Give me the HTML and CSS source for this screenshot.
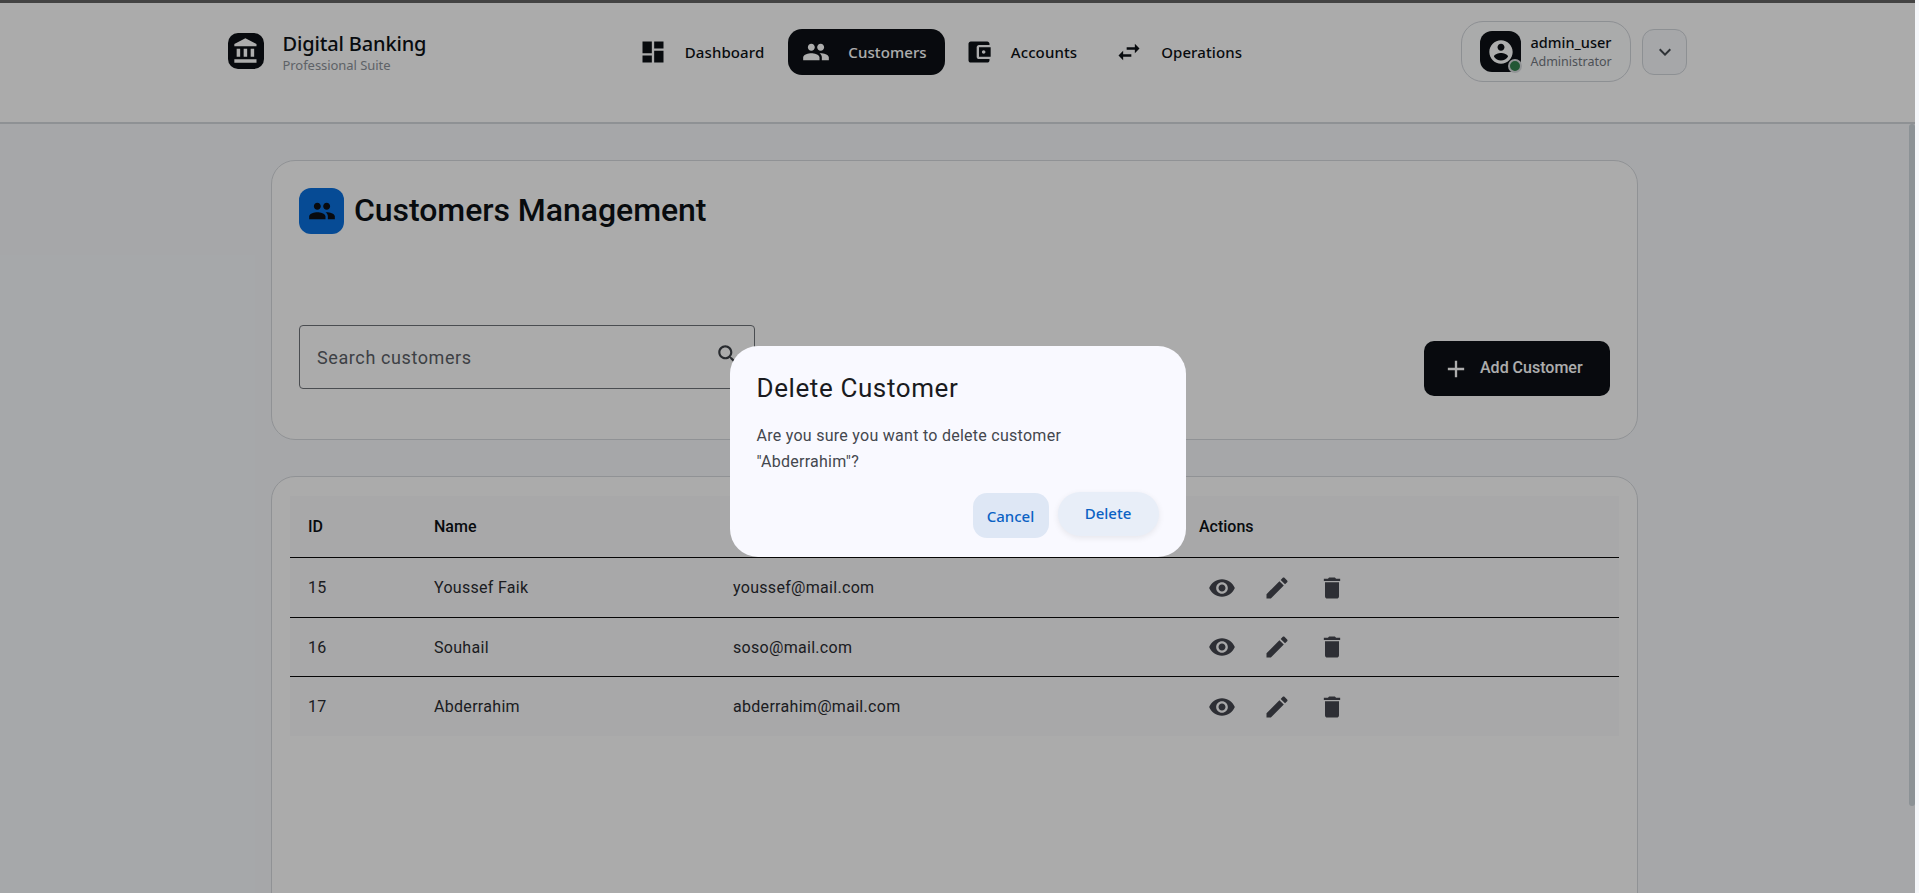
FILE: index.html
```html
<!DOCTYPE html>
<html lang="en">
<head>
  <meta charset="UTF-8" />
  <meta name="viewport" content="width=device-width, initial-scale=1.0"/>
  <title>Digital Banking</title>
  <link rel="stylesheet" href="styles.css">
</head>
<body>

  <svg class="icon-defs" aria-hidden="true">
    <symbol id="i-bank" viewBox="0 0 24 24"><path d="M4 10v7h3v-7H4zm6 0v7h3v-7h-3zM2 22h19v-3H2v3zm14-12v7h3v-7h-3zm-4.500-9L2 6v2h19V6l-9.500-5z"/></symbol>
    <symbol id="i-dashboard" viewBox="0 0 24 24"><path d="M3 13h8V3H3v10zm0 8h8v-6H3v6zm10 0h8V11h-8v10zm0-18v6h8V3h-8z"/></symbol>
    <symbol id="i-people" viewBox="0 0 24 24"><path d="M16 11c1.660 0 2.990-1.340 2.990-3S17.660 5 16 5c-1.660 0-3 1.340-3 3s1.340 3 3 3zm-8 0c1.660 0 2.990-1.340 2.990-3S9.660 5 8 5C6.340 5 5 6.340 5 8s1.340 3 3 3zm0 2c-2.330 0-7 1.170-7 3.500V19h14v-2.500c0-2.330-4.670-3.500-7-3.500zm8 0c-.29 0-.62.02-.97.05 1.160.84 1.970 1.970 1.970 3.450V19h6v-2.500c0-2.330-4.670-3.500-7-3.500z"/></symbol>
    <symbol id="i-wallet" viewBox="0 0 24 24"><path d="M21 18v1c0 1.100-.9 2-2 2H5c-1.110 0-2-.9-2-2V5c0-1.100.89-2 2-2h14c1.100 0 2 .9 2 2v1h-9c-1.110 0-2 .9-2 2v8c0 1.100.89 2 2 2h9zm-9-2h10V8H12v8zm4-2.500c-.83 0-1.500-.67-1.500-1.500s.67-1.500 1.500-1.500 1.500.67 1.500 1.500-.67 1.500-1.500 1.500z"/></symbol>
    <symbol id="i-swap" viewBox="0 0 24 24"><path d="M6.990 11L3 15l3.990 4v-3H14v-2H6.990v-3zM21 9l-3.990-4v3H10v2h7.010v3L21 9z"/></symbol>
    <symbol id="i-account" viewBox="0 0 24 24"><path d="M12 2C6.480 2 2 6.480 2 12s4.480 10 10 10 10-4.480 10-10S17.520 2 12 2zm0 3c1.660 0 3 1.340 3 3s-1.340 3-3 3-3-1.340-3-3 1.340-3 3-3zm0 14.200c-2.500 0-4.710-1.280-6-3.220.03-1.990 4-3.080 6-3.080 1.990 0 5.970 1.090 6 3.080-1.290 1.940-3.500 3.220-6 3.220z"/></symbol>
    <symbol id="i-chevron" viewBox="0 0 24 24"><path d="M16.590 8.590L12 13.170 7.410 8.590 6 10l6 6 6-6z"/></symbol>
    <symbol id="i-search" viewBox="0 0 24 24"><path d="M15.500 14h-.79l-.28-.27C15.410 12.590 16 11.110 16 9.500 16 5.910 13.090 3 9.500 3S3 5.910 3 9.500 5.910 16 9.500 16c1.610 0 3.090-.59 4.230-1.570l.27.28v.79l5 4.990L20.490 19l-4.990-5zm-6 0C7.010 14 5 11.990 5 9.500S7.010 5 9.500 5 14 7.010 14 9.500 11.990 14 9.500 14z"/></symbol>
    <symbol id="i-add" viewBox="0 0 24 24"><path d="M19 13h-6v6h-2v-6H5v-2h6V5h2v6h6v2z"/></symbol>
    <symbol id="i-eye" viewBox="0 0 24 24"><path d="M12 4.500C7 4.500 2.730 7.610 1 12c1.730 4.390 6 7.500 11 7.500s9.270-3.110 11-7.500c-1.730-4.390-6-7.500-11-7.500zM12 17c-2.760 0-5-2.240-5-5s2.240-5 5-5 5 2.240 5 5-2.240 5-5 5zm0-8c-1.660 0-3 1.340-3 3s1.340 3 3 3 3-1.340 3-3-1.340-3-3-3z"/></symbol>
    <symbol id="i-edit" viewBox="0 0 24 24"><path d="M3 17.250V21h3.750L17.810 9.940l-3.750-3.750L3 17.250zM20.710 7.040c.39-.39.39-1.020 0-1.410l-2.340-2.340c-.39-.39-1.020-.39-1.410 0l-1.830 1.830 3.750 3.750 1.830-1.830z"/></symbol>
    <symbol id="i-delete" viewBox="0 0 24 24"><path d="M6 19c0 1.100.9 2 2 2h8c1.100 0 2-.9 2-2V7H6v12zM19 4h-3.500l-1-1h-5l-1 1H5v2h14V4z"/></symbol>
  </svg>

  <div class="page">
    <div class="top-strip"></div>

    <header class="topbar">
      <div class="topbar-inner">
        <div class="brand">
          <div class="brand-logo"><svg class="brand-icon"><use href="#i-bank"/></svg></div>
          <div>
            <div class="brand-name">Digital Banking</div>
            <div class="brand-sub">Professional Suite</div>
          </div>
        </div>

        <nav class="nav">
          <a class="nav-item" href="#"><svg class="nav-icon"><use href="#i-dashboard"/></svg>Dashboard</a>
          <a class="nav-item active" href="#"><svg class="nav-icon"><use href="#i-people"/></svg>Customers</a>
          <a class="nav-item" href="#"><svg class="nav-icon"><use href="#i-wallet"/></svg>Accounts</a>
          <a class="nav-item" href="#"><svg class="nav-icon"><use href="#i-swap"/></svg>Operations</a>
        </nav>

        <div class="user">
          <div class="user-chip">
            <div class="avatar">
              <svg class="avatar-icon"><use href="#i-account"/></svg>
              <span class="status-dot"></span>
            </div>
            <div>
              <div class="user-name">admin_user</div>
              <div class="user-role">Administrator</div>
            </div>
          </div>
          <button class="menu-btn"><svg class="menu-icon"><use href="#i-chevron"/></svg></button>
        </div>
      </div>
    </header>

    <main class="content">
      <section class="card card-top">
        <div class="title-row">
          <div class="title-icon"><svg class="title-glyph"><use href="#i-people"/></svg></div>
          <h1>Customers Management</h1>
        </div>
        <div class="tools-row">
          <div class="search">
            <span>Search customers</span>
            <svg class="search-icon"><use href="#i-search"/></svg>
          </div>
          <button class="add-btn"><svg class="add-icon"><use href="#i-add"/></svg>Add Customer</button>
        </div>
      </section>

      <section class="card card-table">
        <table class="customers">
          <thead>
            <tr><th class="col-id">ID</th><th class="col-name">Name</th><th class="col-email">Email</th><th>Actions</th></tr>
          </thead>
          <tbody>
            <tr>
              <td>15</td><td>Youssef Faik</td><td>youssef@mail.com</td>
              <td><div class="actions">
                <svg class="act-icon"><use href="#i-eye"/></svg>
                <svg class="act-icon"><use href="#i-edit"/></svg>
                <svg class="act-icon"><use href="#i-delete"/></svg>
              </div></td>
            </tr>
            <tr>
              <td>16</td><td>Souhail</td><td>soso@mail.com</td>
              <td><div class="actions">
                <svg class="act-icon"><use href="#i-eye"/></svg>
                <svg class="act-icon"><use href="#i-edit"/></svg>
                <svg class="act-icon"><use href="#i-delete"/></svg>
              </div></td>
            </tr>
            <tr>
              <td>17</td><td>Abderrahim</td><td>abderrahim@mail.com</td>
              <td><div class="actions">
                <svg class="act-icon"><use href="#i-eye"/></svg>
                <svg class="act-icon"><use href="#i-edit"/></svg>
                <svg class="act-icon"><use href="#i-delete"/></svg>
              </div></td>
            </tr>
          </tbody>
        </table>
      </section>
    </main>

    <!-- dim layer + dialog -->
    <div class="overlay">
      <div class="thumb"></div>
      <div class="dialog">
        <h2>Delete Customer</h2>
        <p>Are you sure you want to delete customer "Abderrahim"?</p>
        <div class="dialog-actions">
          <button class="btn-cancel">Cancel</button>
          <button class="btn-delete">Delete</button>
        </div>
      </div>
    </div>
  </div>

</body>
</html>
```

FILE: styles.css
```css
body{margin:0;background:#f5f7fa;font-family:Roboto,"Liberation Sans",sans-serif;color:#0d1116}
button{font:inherit;border:none;cursor:pointer}
.icon-defs{display:none}
svg{fill:currentColor;display:block;flex:none}

.page{position:relative;height:100vh;overflow:hidden;background:#f5f7fa}

.top-strip{height:3px;width:1915px;background:#646464}

/* header */
.topbar{width:1915px;height:119px;background:#fcfcfc;border-bottom:2px solid #d2d6da}
.topbar-inner{width:1460px;margin:0 auto;padding-top:26px;display:flex;justify-content:space-between;align-items:flex-start}
.brand{display:flex;gap:19px;padding-top:4px}
.brand-logo{width:36px;height:36px;background:#0c1015;border-radius:10px;color:#fff;display:flex;align-items:center;justify-content:center}
.brand-icon{width:28px;height:28px}
.brand-name{font-family:"Noto Sans",sans-serif;font-size:20px;font-weight:500;line-height:26px;margin-top:-2px;letter-spacing:-.15px}
.brand-sub{font-family:"Noto Sans",sans-serif;font-size:13px;line-height:16px;color:#8b9198;letter-spacing:-.05px}

.nav{display:flex;gap:6px;margin-left:-3px}
.nav-item{display:flex;align-items:center;gap:18px;height:46px;padding:0 18px 0 14px;border-radius:14px;color:#0d1116;text-decoration:none;font-family:"Noto Sans",sans-serif;font-size:15px;font-weight:500;letter-spacing:.1px}
.nav-item.active{background:#0c1015;color:#fff}
.nav-icon{width:28px;height:28px}

.user{display:flex;gap:11px;align-items:center;margin-top:-8px}
.user-chip{display:flex;align-items:center;gap:9px;width:170px;height:61px;padding-left:18px;box-sizing:border-box;border:1px solid #d0d4d9;border-radius:22px;background:#fbfcfd}
.avatar{position:relative;width:41px;height:41px;background:#0c1015;border-radius:12px;color:#fff;display:flex;align-items:center;justify-content:center}
.avatar-icon{width:28px;height:28px}
.status-dot{position:absolute;right:-1px;bottom:-1px;width:10px;height:10px;background:#34804e;border:2px solid #d8dadd;border-radius:50%}
.user-name{font-family:"Noto Sans",sans-serif;font-size:14.5px;font-weight:500;line-height:21px}
.user-role{font-family:"Noto Sans",sans-serif;font-size:12.5px;line-height:18px;color:#72787f}
.menu-btn{width:45px;height:46px;padding:0;background:#f5f7fa;border:1px solid #d0d4d9;border-radius:12px;color:#454a50;display:flex;align-items:center;justify-content:center}
.menu-icon{width:24px;height:24px}

/* cards */
.content{width:1367px;margin:36px 0 0 271px;display:flex;flex-direction:column;gap:36px}
.card{background:#fcfcfc;border:1px solid #d5d8dc;border-radius:24px;box-sizing:border-box}
.card-top{height:280px;padding:27px 27px 0}
.title-row{display:flex;align-items:center;gap:10px}
.title-icon{width:45px;height:46px;background:#0a6fdc;border-radius:12px;display:flex;align-items:center;justify-content:center;color:#0c1015}
.title-glyph{width:28px;height:28px}
h1{margin:0;font-size:32px;font-weight:500;line-height:46px;margin-top:-2px;letter-spacing:-.05px}

.tools-row{display:flex;justify-content:space-between;align-items:flex-start;margin-top:91px}
.search{width:456px;height:64px;box-sizing:border-box;border:1px solid #6e7278;border-radius:4px;padding:0 13px 0 17px;display:flex;align-items:center;justify-content:space-between;font-size:18px;letter-spacing:.6px;color:#5b5f66}
.search-icon{width:26px;height:26px;color:#3c4046;margin-top:-4px}
.add-btn{width:186px;height:55px;margin-top:16px;background:#0c1015;border-radius:10px;color:#fff;font-size:16px;font-weight:500;display:flex;align-items:center;padding:0 0 3px 18px;gap:10px}
.add-icon{width:28px;height:28px;margin-top:3px}

.card-table{height:600px;padding:19px 18px 18px}
.customers{width:1329px;table-layout:fixed;border-collapse:collapse;background:#f8f8f9;font-size:16px;letter-spacing:.3px}
.customers th{height:61px;padding:0 18px;text-align:left;font-size:16px;font-weight:500;letter-spacing:0;color:#0d1116;border-bottom:1px solid #0a0a0a}
.customers td{height:59px;padding:0 18px;color:#2a2c31;border-bottom:1px solid #0a0a0a}
.customers tbody tr:nth-child(2) td{height:58px}
.customers tr:last-child td{border-bottom:none}
.col-id{width:90px}
.col-name{width:263px}
.col-email{width:430px}
.actions{display:flex;gap:27px;padding-left:9px;color:#44464e}
.act-icon{width:28px;height:28px}

/* dialog */
.overlay{position:absolute;top:0;left:0;bottom:0;right:4px;background:rgba(0,0,0,.32);display:flex;align-items:center;justify-content:center;padding-top:10px;box-sizing:border-box}
.thumb{position:absolute;top:124px;right:0;width:6px;height:682px;background:#8c9296;border-radius:3px}
.dialog{width:456px;height:211px;box-sizing:border-box;padding:26px 27px;background:#f9f9ff;border-radius:28px;color:#1a1b20}
h2{margin:0;font-size:26px;font-weight:400;line-height:32px;letter-spacing:.6px}
.dialog p{margin:19px 0 0;font-size:16px;line-height:26px;color:#44474e;letter-spacing:.27px}
.dialog-actions{display:flex;justify-content:flex-end;align-items:flex-start;gap:9px;margin-top:9px}
.btn-cancel{width:76px;height:45px;margin-top:9px;background:#dee7f5;border-radius:14px;color:#0b62c4;font-family:"Noto Sans",sans-serif;font-size:15px;font-weight:500}
.btn-delete{width:101px;height:44px;margin-top:8px;background:#e8eef8;border-radius:22px;color:#0b62c4;font-family:"Noto Sans",sans-serif;font-size:15px;font-weight:500;padding-bottom:4px;box-shadow:0 2px 6px rgba(0,0,0,.08)}
```
